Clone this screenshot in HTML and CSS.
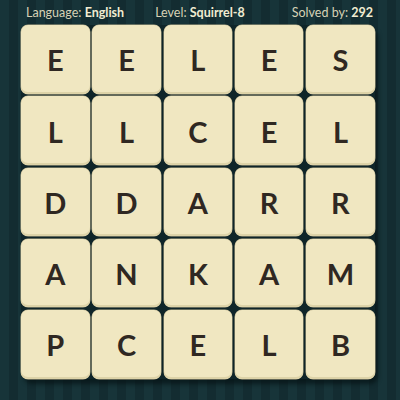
FILE: index.html
```html
<!DOCTYPE html>
<html>
<head>
<meta charset="utf-8">
<link rel="stylesheet" href="styles.css">
</head>
<body>
<div class="page">
  <div class="header">
    <span class="item">Language: <b>English</b></span>
    <span class="item level">Level: <b>Squirrel-8</b></span>
    <span class="item solved">Solved by: <b>292</b></span>
  </div>
  <div class="board">
    <div class="tile">E</div><div class="tile">E</div><div class="tile">L</div><div class="tile">E</div><div class="tile">S</div>
    <div class="tile">L</div><div class="tile">L</div><div class="tile">C</div><div class="tile">E</div><div class="tile">L</div>
    <div class="tile">D</div><div class="tile">D</div><div class="tile">A</div><div class="tile">R</div><div class="tile">R</div>
    <div class="tile">A</div><div class="tile">N</div><div class="tile">K</div><div class="tile">A</div><div class="tile">M</div>
    <div class="tile">P</div><div class="tile">C</div><div class="tile">E</div><div class="tile">L</div><div class="tile">B</div>
  </div>
</div>
</body>
</html>
```
FILE: styles.css
```css
html, body {
  margin: 0;
  padding: 0;
  width: 400px;
  height: 400px;
  overflow: hidden;
}
body {
  background: repeating-linear-gradient(90deg, #173439 0 9px, #132c31 9px 18px);
  font-family: "Lato", "Liberation Sans", sans-serif;
}
.page {
  display: flex;
  flex-direction: column;
  padding: 0 0 0 21px;
}
.header {
  display: flex;
  align-items: center;
  height: 25px;
  padding: 0 27px 0 5px;
  color: #d6d2b6;
  font-size: 12.5px;
}
.header b {
  color: #f1ecd2;
  font-weight: 700;
}
.level {
  margin-left: 31px;
}
.solved {
  margin-left: auto;
}
.board {
  display: grid;
  grid-template-columns: repeat(5, 68.5px);
  grid-auto-rows: 68.5px;
  gap: 2.8px;
  width: max-content;
  background: #0f2529;
  border-radius: 8px;
  box-shadow: 3px 5px 4px rgba(5, 18, 20, 0.7);
}
.tile {
  display: flex;
  align-items: center;
  justify-content: center;
  background: #f0e7c1;
  border-radius: 7px;
  box-shadow: inset 0 -2px 0 #ddd3a8, 0 0 0 0.5px #b9b08c;
  color: #2f2822;
  font-size: 29px;
  font-weight: 700;
  padding-top: 1px;
}
```
